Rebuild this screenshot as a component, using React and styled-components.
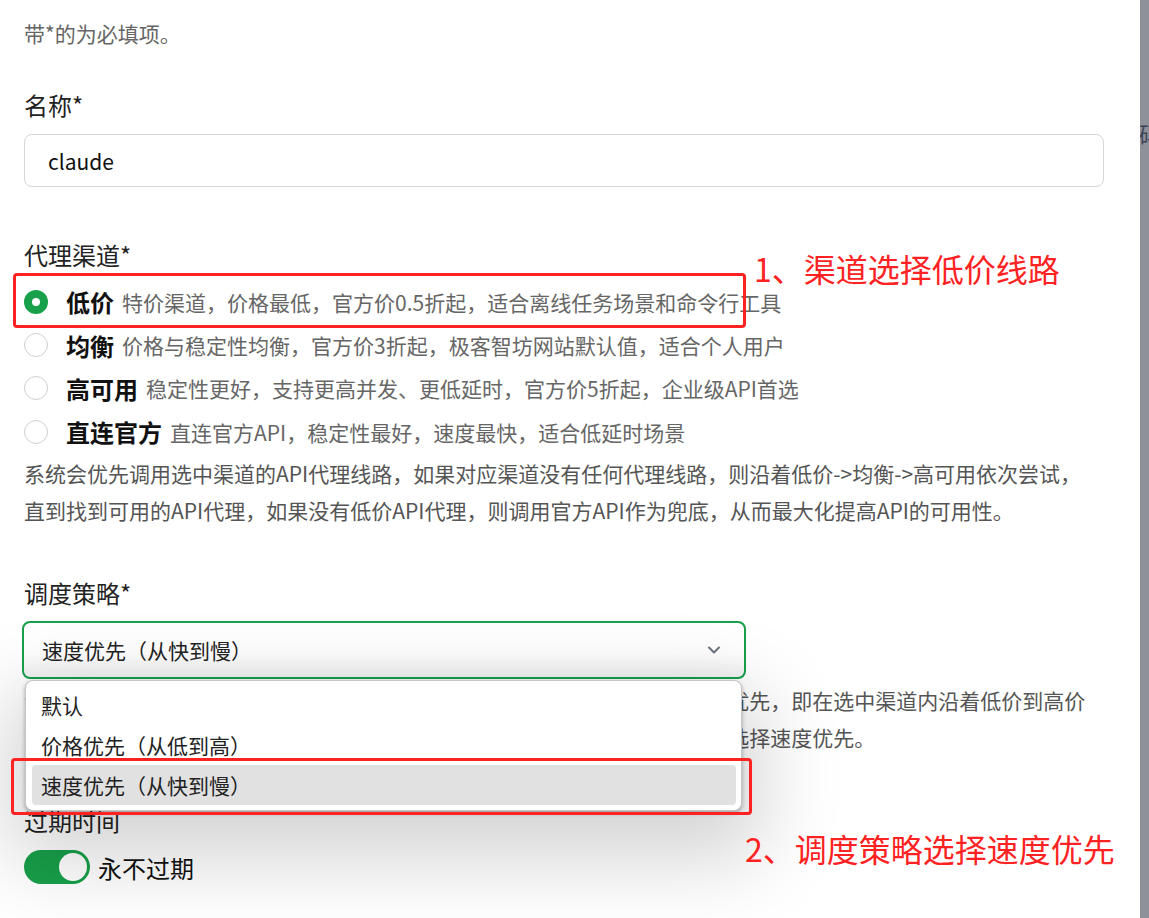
import { createGlobalStyle } from "styled-components";
import styled from "styled-components";
import { ChevronDown } from "lucide-react";

const GlobalStyle = createGlobalStyle`
  html, body {
    margin: 0;
    padding: 0;
    background: #fff;
  }
  body {
    font-family: "Noto Sans CJK SC", "Noto Sans", sans-serif;
    color: #222;
  }
`;

const channels = [
  { name: "低价", desc: "特价渠道，价格最低，官方价0.5折起，适合离线任务场景和命令行工具", checked: true },
  { name: "均衡", desc: "价格与稳定性均衡，官方价3折起，极客智坊网站默认值，适合个人用户" },
  { name: "高可用", desc: "稳定性更好，支持更高并发、更低延时，官方价5折起，企业级API首选" },
  { name: "直连官方", desc: "直连官方API，稳定性最好，速度最快，适合低延时场景" },
];

const strategies = ["默认", "价格优先（从低到高）", "速度优先（从快到慢）"];

function App() {
  return (
    <>
      <GlobalStyle />
      <Screen>
        <Panel>
          <Hint>带*的为必填项。</Hint>

          <Label $top={39}>名称*</Label>
          <TextInput>claude</TextInput>

          <Label $top={51}>代理渠道*</Label>
          <RadioList>
            {channels.map((c) => (
              <RadioRow key={c.name}>
                <Radio $checked={c.checked} />
                <RadioName>{c.name}</RadioName>
                <RadioDesc>{c.desc}</RadioDesc>
              </RadioRow>
            ))}
          </RadioList>
          <Help>
            系统会优先调用选中渠道的API代理线路，如果对应渠道没有任何代理线路，则沿着低价-&gt;均衡-&gt;高可用依次尝试，直到找到可用的API代理，如果没有低价API代理，则调用官方API作为兜底，从而最大化提高API的可用性。
          </Help>

          <Label $top={47}>调度策略*</Label>
          <SelectWrap>
            <SelectBox>
              <span>速度优先（从快到慢）</span>
              <ChevronDown size={20} strokeWidth={2.4} color="#6b7280" />
            </SelectBox>
            <Menu>
              {strategies.map((s, i) => (
                <MenuItem key={s} $active={i === 2}>
                  {s}
                </MenuItem>
              ))}
            </Menu>
          </SelectWrap>
          <Help $top={3}>
            调度策略决定在同一渠道内存在多条API代理线路时的调用顺序，默认为价格优先，即在选中渠道内沿着低价到高价的顺序依次调用API代理线路；如对响应速度有更高要求，实时对话场景，请选择速度优先。
          </Help>

          <Label $top={48}>过期时间</Label>
          <SwitchRow>
            <Switch>
              <Knob />
            </Switch>
            <SwitchText>永不过期</SwitchText>
          </SwitchRow>

          <MarkBox style={{ left: 13, top: 273, width: 733, height: 55 }} />
          <MarkText style={{ left: 754, top: 250 }}>1、渠道选择低价线路</MarkText>
          <MarkBox style={{ left: 11, top: 758, width: 741, height: 57 }} />
          <MarkText style={{ left: 745, top: 830 }}>2、调度策略选择速度优先</MarkText>
        </Panel>
        <Backdrop>
          <BackdropText>码</BackdropText>
        </Backdrop>
      </Screen>
    </>
  );
}

const Screen = styled.div`
  display: flex;
  width: 1149px;
  height: 918px;
  overflow: hidden;
  background: #8e919a;
`;

const Panel = styled.div`
  position: relative;
  flex: 1;
  min-width: 0;
  display: flex;
  flex-direction: column;
  padding: 17px 36px 0 24px;
  background: #fff;
`;

const Backdrop = styled.div`
  flex: 0 0 9px;
  background: #8e919a;
  overflow: hidden;
  position: relative;
`;

const BackdropText = styled.div`
  position: absolute;
  left: -1px;
  top: 118px;
  font-size: 22px;
  line-height: 30px;
  color: #3c4454;
`;

const Hint = styled.div`
  font-size: 21px;
  line-height: 32px;
  color: #666;
`;

const Label = styled.div`
  margin-top: ${({ $top }) => $top}px;
  font-size: 24px;
  line-height: 34px;
  color: #222;
`;

const TextInput = styled.div`
  margin-top: 12px;
  height: 53px;
  box-sizing: border-box;
  display: flex;
  align-items: center;
  padding-left: 23px;
  border: 1px solid #d5d5db;
  border-radius: 8px;
  font-size: 21px;
  color: #111;
`;

const RadioList = styled.div`
  margin-top: 8px;
  display: flex;
  flex-direction: column;
`;

const RadioRow = styled.div`
  height: 43.4px;
  display: flex;
  align-items: center;
`;

const Radio = styled.span`
  width: 24px;
  height: 24px;
  box-sizing: border-box;
  border-radius: 50%;
  flex-shrink: 0;
  border: ${({ $checked }) => ($checked ? "8px solid #18a04a" : "1px solid #cfcfd4")};
  background: #fff;
`;

const RadioName = styled.span`
  margin-left: 18px;
  font-size: 24px;
  font-weight: 700;
  color: #111;
`;

const RadioDesc = styled.span`
  margin-left: 8px;
  font-size: 21px;
  color: #666;
`;

const Help = styled.p`
  margin: ${({ $top }) => $top || 1}px 0 0;
  max-width: 1072px;
  font-size: 21px;
  line-height: 37px;
  color: #555;
`;

const SelectWrap = styled.div`
  position: relative;
  margin: 11px 0 0 -2px;
  width: 724px;
`;

const SelectBox = styled.div`
  height: 58px;
  box-sizing: border-box;
  display: flex;
  align-items: center;
  justify-content: space-between;
  padding: 0 20px 0 18px;
  border: 2px solid #18a04a;
  border-radius: 8px;
  background: linear-gradient(#fff 55%, #f2f2f3);
  font-size: 21px;
  color: #222;
`;

const Menu = styled.div`
  position: absolute;
  left: 3px;
  top: 59px;
  width: 717px;
  box-sizing: border-box;
  padding: 4px 5px 5px 6px;
  background: #fff;
  border: 1px solid #c4c4c9;
  border-radius: 8px;
  box-shadow: 0 2px 4px rgba(0, 0, 0, 0.3), 0 30px 80px 20px rgba(0, 0, 0, 0.17);
  z-index: 2;
`;

const MenuItem = styled.div`
  height: 40px;
  display: flex;
  align-items: center;
  padding-left: 9px;
  border-radius: 4px;
  font-size: 21px;
  color: #222;
  background: ${({ $active }) => ($active ? "#e1e1e1" : "transparent")};
`;

const SwitchRow = styled.div`
  margin-top: 12px;
  display: flex;
  align-items: center;
  gap: 8px;
`;

const Switch = styled.div`
  width: 66px;
  height: 34px;
  box-sizing: border-box;
  padding: 3px;
  border-radius: 17px;
  background: #18a04a;
  display: flex;
  justify-content: flex-end;
`;

const Knob = styled.div`
  width: 28px;
  height: 28px;
  border-radius: 50%;
  background: #fff;
`;

const SwitchText = styled.span`
  font-size: 24px;
  color: #111;
`;

const MarkBox = styled.div`
  position: absolute;
  box-sizing: border-box;
  border: 3px solid #ff2222;
  border-radius: 4px;
  z-index: 3;
  pointer-events: none;
`;

const MarkText = styled.div`
  position: absolute;
  font-size: 32px;
  line-height: 36px;
  color: #ff2222;
  white-space: nowrap;
  z-index: 3;
`;

export default App;
